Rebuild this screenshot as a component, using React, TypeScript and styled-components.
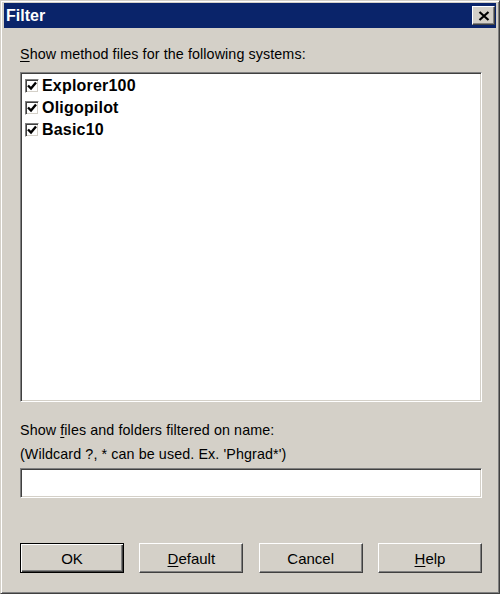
import React from 'react'
import styled, { createGlobalStyle } from 'styled-components'

const GlobalStyle = createGlobalStyle`
  html, body {
    margin: 0;
    padding: 0;
    background: #d4d0c8;
  }
  body {
    font-family: "Liberation Sans", Arial, sans-serif;
  }
`

const systems = ['Explorer100', 'Oligopilot', 'Basic10']

const Window = styled.div`
  box-sizing: border-box;
  width: 500px;
  height: 594px;
  background: #d4d0c8;
  border: 1px solid;
  border-color: #d4d0c8 #404040 #404040 #d4d0c8;
  box-shadow: inset 1px 1px #ffffff, inset -1px -1px #808080;
  padding: 2px 3px 3px 3px;
  display: flex;
  flex-direction: column;
`

const TitleBar = styled.div`
  height: 25px;
  flex-shrink: 0;
  background: #0a246a;
  display: flex;
  align-items: center;
  justify-content: space-between;
  padding: 0 1px 0 2px;
`

const Title = styled.span`
  color: #ffffff;
  font: bold 16px "Liberation Sans", Arial, sans-serif;
`

const CloseButton = styled.button`
  box-sizing: border-box;
  width: 23px;
  height: 19px;
  padding: 0;
  background: #d4d0c8;
  border: 1px solid;
  border-color: #ffffff #404040 #404040 #ffffff;
  box-shadow: inset -1px -1px #808080;
  display: flex;
  align-items: center;
  justify-content: center;
`

const Body = styled.div`
  flex: 1;
  display: flex;
  flex-direction: column;
  padding: 0 14px 0 16px;
`

const Label = styled.div<{ $top: number }>`
  margin-top: ${p => p.$top}px;
  font-size: 14.3px;
  line-height: 16px;
  color: #000000;
  white-space: nowrap;
  letter-spacing: 0.1px;
`

const Key = styled.span`
  text-decoration: underline;
  text-underline-offset: 2px;
`

const Sunken = styled.div`
  box-sizing: border-box;
  background: #ffffff;
  border: 1px solid;
  border-color: #808080 #ffffff #ffffff #808080;
  box-shadow: inset 1px 1px #404040, inset -1px -1px #d4d0c8;
`

const ListBox = styled(Sunken)`
  height: 330px;
  margin-top: 10px;
  padding: 2px 2px;
`

const Item = styled.div`
  display: flex;
  align-items: center;
  gap: 3px;
  height: 22px;
  padding-left: 2px;
`

const CheckBox = styled(Sunken)`
  width: 14px;
  height: 14px;
  display: flex;
  align-items: center;
  justify-content: center;
`

const ItemText = styled.span`
  font: bold 16px "Liberation Sans", Arial, sans-serif;
  color: #000000;
  letter-spacing: 0.2px;
`

const NameInput = styled(Sunken)`
  height: 30px;
  margin-top: 6px;
`

const ButtonRow = styled.div`
  margin-top: 45px;
  display: flex;
  justify-content: space-between;
`

const Button = styled.button<{ $default?: boolean }>`
  box-sizing: border-box;
  width: 104px;
  height: 30px;
  padding: 0;
  background: #d4d0c8;
  font: 15px "Liberation Sans", Arial, sans-serif;
  color: #000000;
  border: 1px solid;
  border-color: ${p => (p.$default ? '#000000' : '#ffffff #404040 #404040 #ffffff')};
  box-shadow: ${p =>
    p.$default
      ? 'inset 1px 1px #ffffff, inset -1px -1px #404040, inset -2px -2px #808080'
      : 'inset -1px -1px #808080'};
`

const Check = () => (
  <svg width="10" height="10" viewBox="0 0 10 10">
    <path d="M1 4.5 L4 7.5 L9 1.5" fill="none" stroke="#000" strokeWidth="2.4" />
  </svg>
)

const App: React.FC = () => {
  return (
    <>
      <GlobalStyle />
      <Window>
        <TitleBar>
          <Title>Filter</Title>
          <CloseButton>
            <svg width="12" height="10" viewBox="0 0 12 10">
              <path d="M1.5 1 L10.5 9 M10.5 1 L1.5 9" stroke="#000" strokeWidth="2.2" />
            </svg>
          </CloseButton>
        </TitleBar>
        <Body>
          <Label $top={18}>
            <Key>S</Key>how method files for the following systems:
          </Label>
          <ListBox>
            {systems.map(name => (
              <Item key={name}>
                <CheckBox>
                  <Check />
                </CheckBox>
                <ItemText>{name}</ItemText>
              </Item>
            ))}
          </ListBox>
          <Label $top={20}>
            Show <Key>f</Key>iles and folders filtered on name:
          </Label>
          <Label $top={8}>(Wildcard ?, * can be used. Ex. 'Phgrad*')</Label>
          <NameInput />
          <ButtonRow>
            <Button $default>OK</Button>
            <Button>
              <Key>D</Key>efault
            </Button>
            <Button>Cancel</Button>
            <Button>
              <Key>H</Key>elp
            </Button>
          </ButtonRow>
        </Body>
      </Window>
    </>
  )
}

export default App
